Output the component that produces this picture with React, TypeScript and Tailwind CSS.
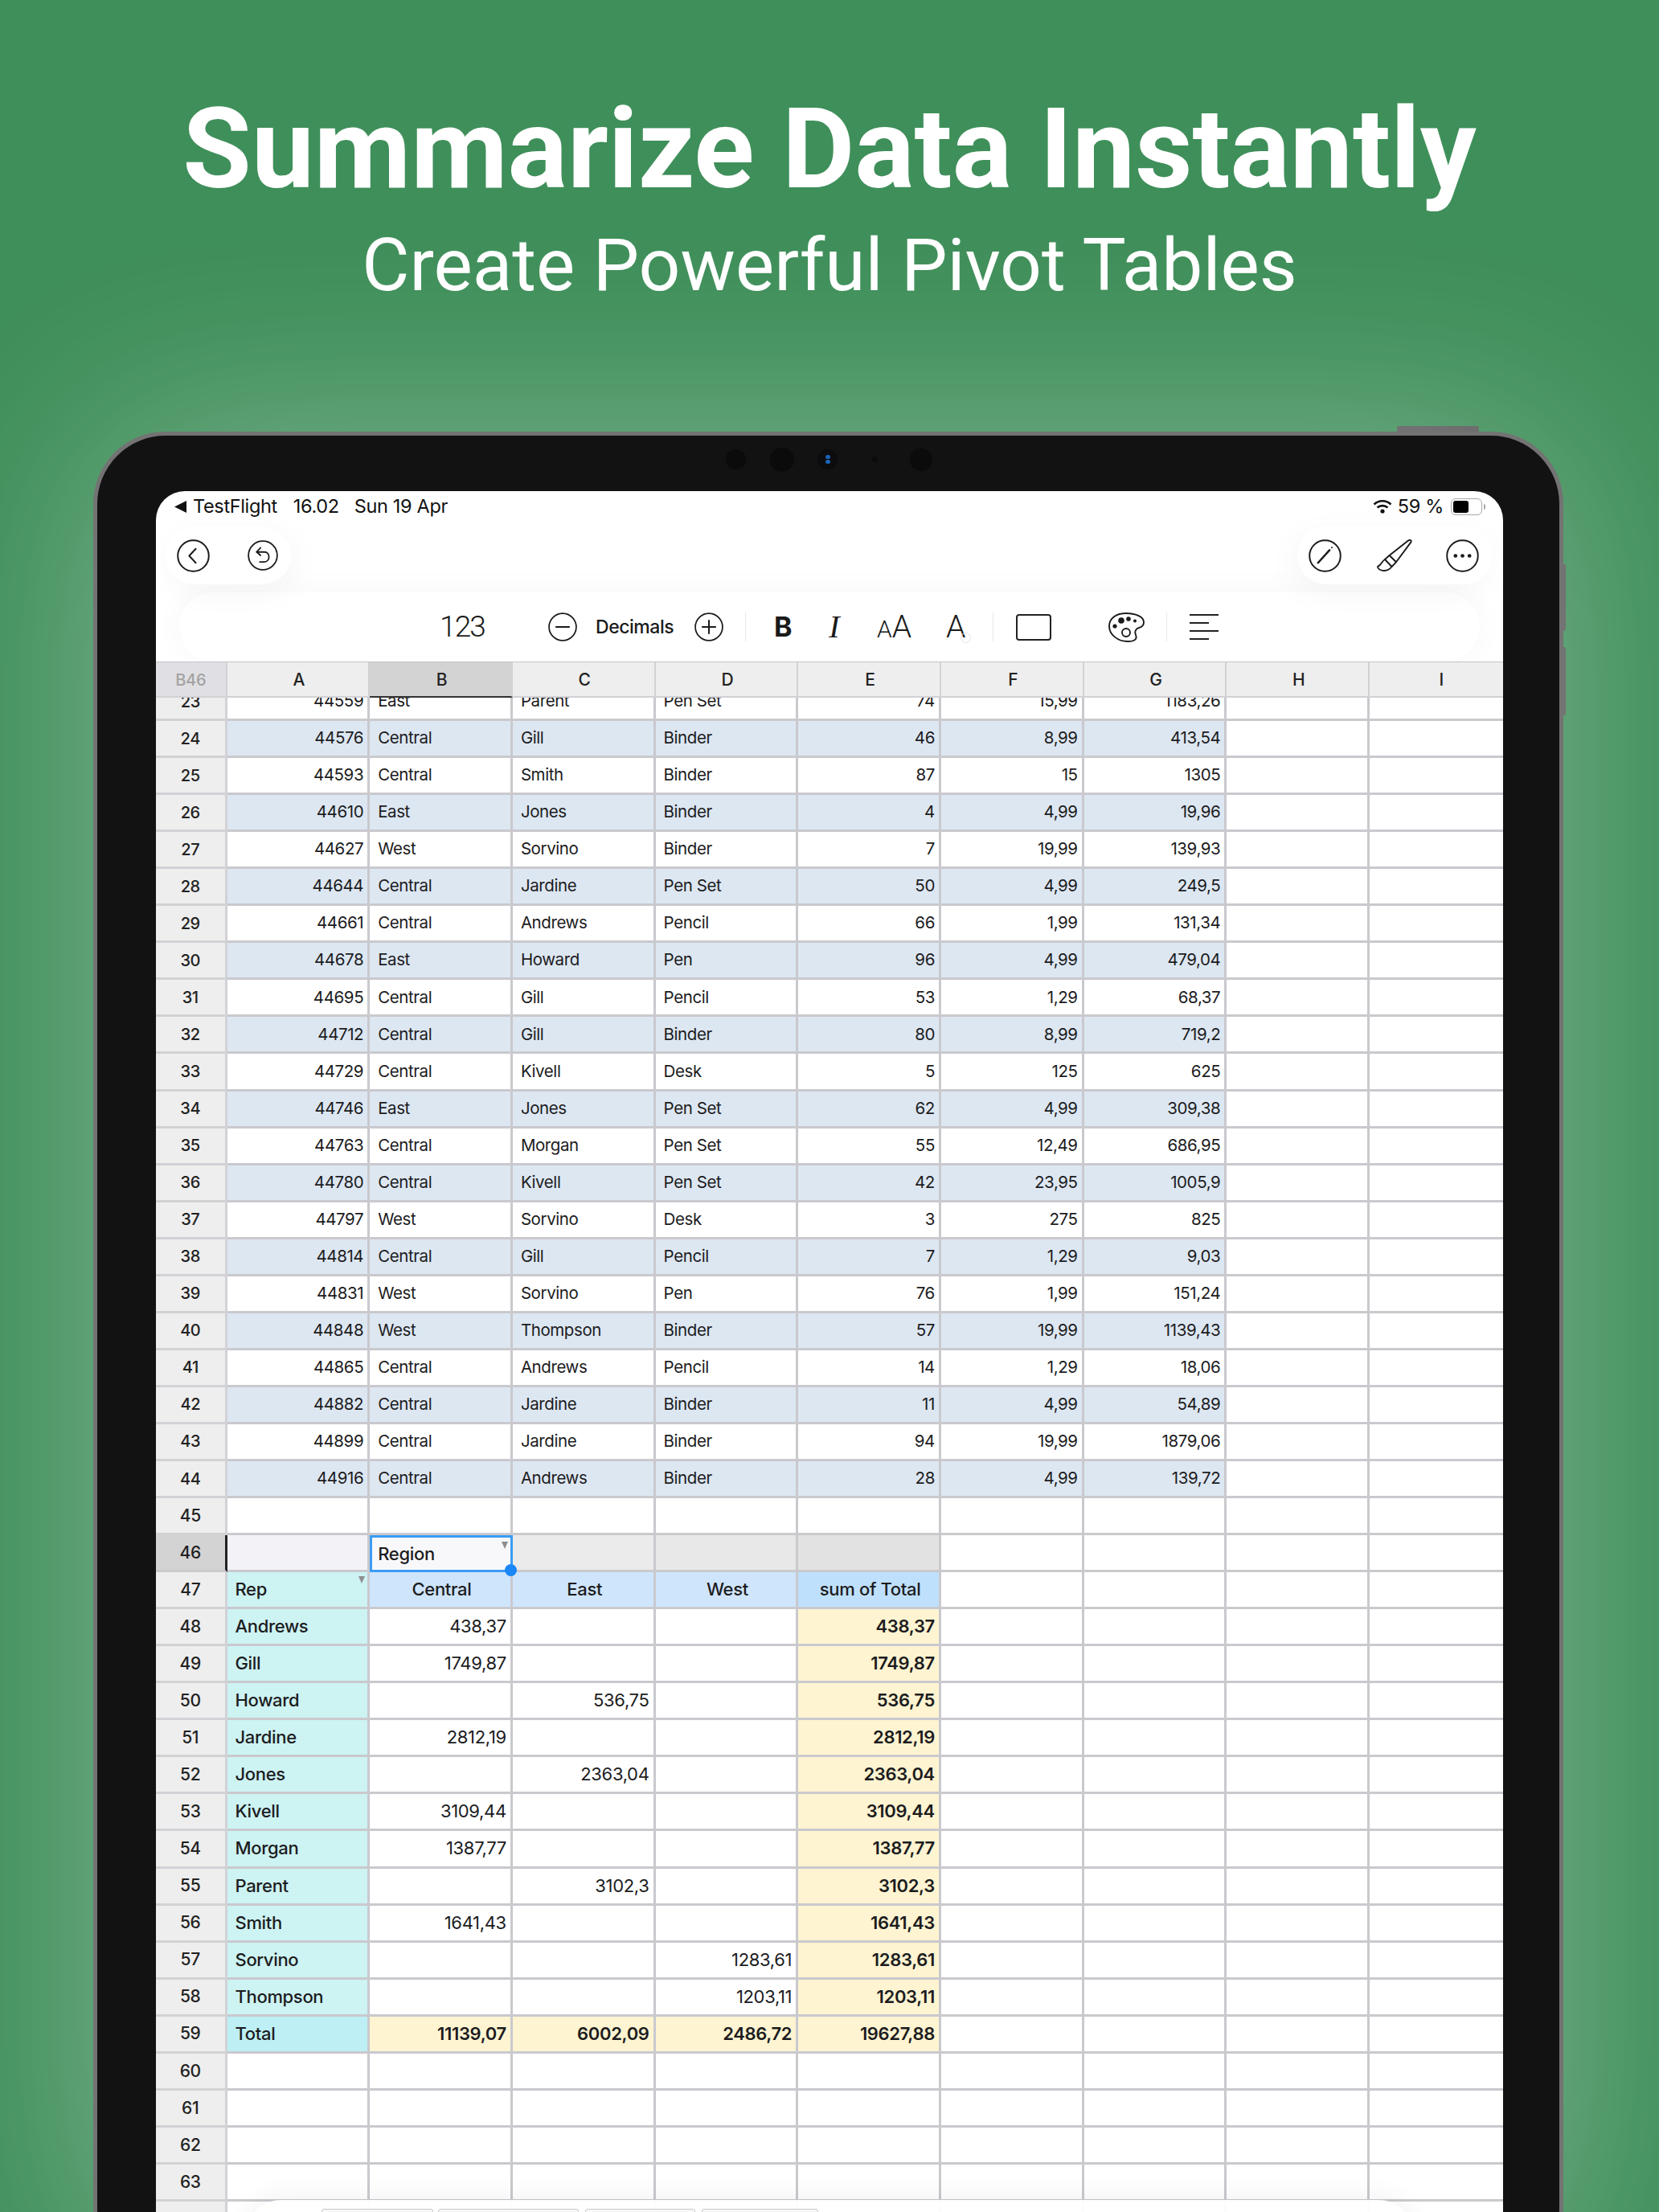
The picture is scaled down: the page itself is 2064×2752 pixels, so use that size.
import React from "react";

type C = { t?: string; a?: "l" | "r" | "c"; bg?: string; w?: string; tri?: boolean; sel?: boolean };

const raw: [number, number, string, string, string, number, string, string][] = [
  [23, 44559, "East", "Parent", "Pen Set", 74, "15,99", "1183,26"],
  [24, 44576, "Central", "Gill", "Binder", 46, "8,99", "413,54"],
  [25, 44593, "Central", "Smith", "Binder", 87, "15", "1305"],
  [26, 44610, "East", "Jones", "Binder", 4, "4,99", "19,96"],
  [27, 44627, "West", "Sorvino", "Binder", 7, "19,99", "139,93"],
  [28, 44644, "Central", "Jardine", "Pen Set", 50, "4,99", "249,5"],
  [29, 44661, "Central", "Andrews", "Pencil", 66, "1,99", "131,34"],
  [30, 44678, "East", "Howard", "Pen", 96, "4,99", "479,04"],
  [31, 44695, "Central", "Gill", "Pencil", 53, "1,29", "68,37"],
  [32, 44712, "Central", "Gill", "Binder", 80, "8,99", "719,2"],
  [33, 44729, "Central", "Kivell", "Desk", 5, "125", "625"],
  [34, 44746, "East", "Jones", "Pen Set", 62, "4,99", "309,38"],
  [35, 44763, "Central", "Morgan", "Pen Set", 55, "12,49", "686,95"],
  [36, 44780, "Central", "Kivell", "Pen Set", 42, "23,95", "1005,9"],
  [37, 44797, "West", "Sorvino", "Desk", 3, "275", "825"],
  [38, 44814, "Central", "Gill", "Pencil", 7, "1,29", "9,03"],
  [39, 44831, "West", "Sorvino", "Pen", 76, "1,99", "151,24"],
  [40, 44848, "West", "Thompson", "Binder", 57, "19,99", "1139,43"],
  [41, 44865, "Central", "Andrews", "Pencil", 14, "1,29", "18,06"],
  [42, 44882, "Central", "Jardine", "Binder", 11, "4,99", "54,89"],
  [43, 44899, "Central", "Jardine", "Binder", 94, "19,99", "1879,06"],
  [44, 44916, "Central", "Andrews", "Binder", 28, "4,99", "139,72"],
];

const pivot: [number, string, string, string, string, string][] = [
  [48, "Andrews", "438,37", "", "", "438,37"],
  [49, "Gill", "1749,87", "", "", "1749,87"],
  [50, "Howard", "", "536,75", "", "536,75"],
  [51, "Jardine", "2812,19", "", "", "2812,19"],
  [52, "Jones", "", "2363,04", "", "2363,04"],
  [53, "Kivell", "3109,44", "", "", "3109,44"],
  [54, "Morgan", "1387,77", "", "", "1387,77"],
  [55, "Parent", "", "3102,3", "", "3102,3"],
  [56, "Smith", "1641,43", "", "", "1641,43"],
  [57, "Sorvino", "", "", "1283,61", "1283,61"],
  [58, "Thompson", "", "", "1203,11", "1203,11"],
];

const BLUE = "bg-[#dde7f2]";
const CYAN = "bg-[#cdf3f3]";
const HEAD = "bg-[#cfe5fc]";
const CREAM = "bg-[#fff4d1]";

function blanks(n: number): C[] {
  return Array.from({ length: n }, () => ({}));
}

function Tri() {
  return (
    <svg width="8" height="9" viewBox="0 0 8 9" className="absolute top-[5px] right-[3px]">
      <polygon points="0,0 8,0 4,9" fill="#8e8e8e" />
    </svg>
  );
}

function Cell({ c }: { c: C }) {
  const align = c.a === "r" ? "justify-end pr-[5px]" : c.a === "c" ? "justify-center pl-[4px]" : "justify-start pl-[10px]";
  return (
    <div
      className={`relative flex h-full w-[177.7px] shrink-0 items-center box-border border-r-[3px] border-b-[3px] border-[#c9c9ce] ${align} ${
        c.bg ?? "bg-white"
      } ${c.w ?? "font-normal"}`}
    >
      {c.t}
      {c.tri && <Tri />}
    </div>
  );
}

function Row({ n, cells, active, big }: { n: number; cells: C[]; active?: boolean; big?: boolean }) {
  return (
    <div className={`flex h-[46.05px] shrink-0 text-[#1c1c1e] ${big ? "text-[22px] tracking-[-0.015em]" : "text-[20.5px] tracking-[-0.02em]"}`}>
      <div
        className={`flex h-full w-[88.5px] shrink-0 items-center justify-center box-border border-b-[3px] border-r-[3px] font-medium text-[#222] ${
          big ? "text-[21px]" : "text-[20px]"
        } ${active ? "bg-[#d3d3d3] border-b-[#c9c9ce] border-r-[#222]" : "bg-[#eeeeee] border-[#d2d2d6]"}`}
      >
        {n}
      </div>
      {cells.map((c, i) =>
        c.sel ? (
          <div
            key={i}
            className="relative flex h-[46px] w-[177.7px] shrink-0 items-center box-border border-[3px] border-[#3b9cf3] bg-[#f8f8fb] pl-[7px] pt-[1px] font-medium"
          >
            {c.t}
            <Tri />
            <div className="absolute -right-[8px] -bottom-[8px] z-10 h-[15px] w-[15px] rounded-full bg-[#1b86f5]" />
          </div>
        ) : (
          <Cell key={i} c={c} />
        )
      )}
    </div>
  );
}

function Ring({ d, children }: { d: number; children: React.ReactNode }) {
  return (
    <svg width={d} height={d} viewBox="0 0 40 40" fill="none" stroke="#1a1a1a" strokeWidth="1.9" strokeLinecap="round" strokeLinejoin="round" className="shrink-0">
      <circle cx="20" cy="20" r="18.8" />
      {children}
    </svg>
  );
}

function Sep({ ml }: { ml: string }) {
  return <div className={`h-[36px] w-[1px] shrink-0 bg-[#e8e8e8] ${ml}`} />;
}

export default function App() {
  const head = ["A", "B", "C", "D", "E", "F", "G", "H", "I"];
  const rows: React.ReactNode[] = [];
  raw.forEach((r) => {
    const bg = r[0] % 2 === 0 ? BLUE : "bg-white";
    rows.push(
      <Row
        key={r[0]}
        n={r[0]}
        cells={[
          { t: String(r[1]), a: "r", bg },
          { t: r[2], bg },
          { t: r[3], bg },
          { t: r[4], bg },
          { t: String(r[5]), a: "r", bg },
          { t: r[6], a: "r", bg },
          { t: r[7], a: "r", bg },
          {},
          {},
        ]}
      />
    );
  });
  rows.push(<Row key={45} n={45} cells={blanks(9)} big />);
  rows.push(
    <Row
      key={46}
      n={46}
      active
      big
      cells={[
        { bg: "bg-[#f2f2f7]" },
        { t: "Region", sel: true },
        { bg: "bg-[#ebebeb]" },
        { bg: "bg-[#e8e8e8]" },
        { bg: "bg-[#e2e2e2]" },
        {},
        {},
        {},
        {},
      ]}
    />
  );
  rows.push(
    <Row
      key={47}
      n={47}
      big
      cells={[
        { t: "Rep", bg: CYAN, w: "font-medium", tri: true },
        { t: "Central", a: "c", bg: HEAD, w: "font-medium" },
        { t: "East", a: "c", bg: HEAD, w: "font-medium" },
        { t: "West", a: "c", bg: HEAD, w: "font-medium" },
        { t: "sum of Total", a: "c", bg: "bg-[#bfe0fd]", w: "font-medium" },
        {},
        {},
        {},
        {},
      ]}
    />
  );
  pivot.forEach((p) => {
    rows.push(
      <Row
        key={p[0]}
        n={p[0]}
        big
        cells={[
          { t: p[1], bg: CYAN, w: "font-medium" },
          { t: p[2], a: "r" },
          { t: p[3], a: "r" },
          { t: p[4], a: "r" },
          { t: p[5], a: "r", bg: CREAM, w: "font-semibold" },
          {},
          {},
          {},
          {},
        ]}
      />
    );
  });
  rows.push(
    <Row
      key={59}
      n={59}
      big
      cells={[
        { t: "Total", bg: "bg-[#bdeff4]", w: "font-medium" },
        { t: "11139,07", a: "r", bg: CREAM, w: "font-semibold" },
        { t: "6002,09", a: "r", bg: CREAM, w: "font-semibold" },
        { t: "2486,72", a: "r", bg: CREAM, w: "font-semibold" },
        { t: "19627,88", a: "r", bg: CREAM, w: "font-semibold" },
        {},
        {},
        {},
        {},
      ]}
    />
  );
  [60, 61, 62, 63, 64].forEach((n) => rows.push(<Row key={n} n={n} cells={blanks(9)} big />));

  return (
    <div className="relative h-[2752px] w-[2064px] overflow-hidden bg-[#3f8f5a] [font-family:Inter,sans-serif]">
      <div className="h-[537px] pt-[119px] text-center text-white [font-family:Roboto,sans-serif]">
        <div className="h-[134px] text-[139px] font-bold leading-[134px] whitespace-nowrap">Summarize Data Instantly</div>
        <div className="mt-[31px] h-[92px] text-[91px] font-normal leading-[92px] whitespace-nowrap">Create Powerful Pivot Tables</div>
      </div>

      <div className="relative ml-[116px] h-[2300px] w-[1829px]">
        <div className="absolute -top-[7px] left-[1622px] h-[8px] w-[102px] rounded-t-[2px] bg-[#5a5a5a]" />
        <div className="absolute top-[165px] -right-[3px] h-[83px] w-[4px] rounded-r-[2px] bg-[#5a5a5a]" />
        <div className="absolute top-[268px] -right-[3px] h-[85px] w-[4px] rounded-r-[2px] bg-[#5a5a5a]" />

        <div className="relative box-border h-full w-full rounded-[90px] border-[5px] border-[#737373] bg-[#121212] pl-[73px] pr-[70px] pt-[69px] shadow-[0_0_300px_rgba(255,255,255,0.32)]">
          {/* camera row */}
          <div className="absolute left-[782px] top-[17px] h-[25px] w-[25px] rounded-full bg-[#0b0b0b]" />
          <div className="absolute left-[837px] top-[15px] h-[30px] w-[30px] rounded-full bg-[#0b0b0b]" />
          <div className="absolute left-[896px] top-[17px] flex h-[25px] w-[25px] flex-col items-center justify-center gap-[1px] rounded-full bg-[#0c0c0e]">
            <div className="h-[5px] w-[6px] rounded-full bg-[#1a63b8]" />
            <div className="h-[5px] w-[6px] rounded-full bg-[#1a63b8]" />
          </div>
          <div className="absolute left-[964px] top-[26px] h-[7px] w-[7px] rounded-full bg-[#0b0b0b]" />
          <div className="absolute left-[1011px] top-[16px] h-[28px] w-[28px] rounded-full bg-[#0b0b0b]" />

          {/* screen */}
          <div className="relative h-[2200px] overflow-hidden rounded-t-[36px] bg-white">
            {/* status bar */}
            <div className="flex h-[44px] items-center justify-between pb-[6px] pl-[23px] pr-[22px] text-[23.5px] tracking-[-0.015em] text-[#111]">
              <div className="flex items-center">
                <svg width="15" height="15" viewBox="0 0 15 15">
                  <polygon points="15,0 15,15 0,7.5" fill="#111" />
                </svg>
                <span className="ml-[8px]">TestFlight</span>
                <span className="ml-[20px]">16.02</span>
                <span className="ml-[19px]">Sun 19 Apr</span>
              </div>
              <div className="flex items-center">
                <svg width="24" height="18" viewBox="0 0 24 18" fill="none" stroke="#111" strokeWidth="2.6">
                  <path d="M1.5 6.5C7.5 0.9 16.5 0.9 22.5 6.5" />
                  <path d="M5.5 10.5C9.3 7.3 14.7 7.3 18.5 10.5" />
                  <circle cx="12" cy="15" r="2.6" fill="#111" stroke="none" />
                </svg>
                <span className="ml-[7px]">59 %</span>
                <div className="ml-[9px] box-border flex h-[21px] w-[39px] items-center rounded-[6px] border-[1.5px] border-[#a8a8a8] p-[2px]">
                  <div className="h-full w-[19px] rounded-[3px] bg-black" />
                </div>
                <div className="ml-[2px] h-[7px] w-[2px] rounded-r-[2px] bg-[#a8a8a8]" />
              </div>
            </div>

            {/* top buttons */}
            <div className="flex h-[72px] items-center justify-between pl-[12px] pr-[13.5px]">
              <div className="flex h-[72px] w-[156px] items-center rounded-[36px] bg-white pl-[14px] shadow-[6px_10px_40px_rgba(0,0,0,0.04)]">
                <Ring d={41}>
                  <path d="M23 11.5L15 20L23 28.5" />
                </Ring>
                <div className="ml-[46.5px]">
                  <Ring d={38}>
                    <path d="M17 10L12 15.5L17 20" />
                    <path d="M12 15.5H22C26 15.5 28 18.5 28 22C28 26 25 28.5 21.5 28.5H16" />
                  </Ring>
                </div>
              </div>
              <div className="flex h-[72px] w-[243px] items-center rounded-[36px] bg-white pl-[14.5px] shadow-[-6px_10px_40px_rgba(0,0,0,0.04)]">
                <Ring d={41}>
                  <path d="M11.5 28.5L25.5 13" strokeWidth="2.4" />
                  <circle cx="28.3" cy="10" r="1" fill="#1a1a1a" stroke="none" />
                </Ring>
                <svg width="44" height="41" viewBox="0 0 44 41" fill="none" stroke="#1a1a1a" strokeWidth="1.9" strokeLinejoin="round" strokeLinecap="round" className="ml-[43.5px] shrink-0">
                  <path d="M15.6 20L39 1.6C41.5 0 43.5 1.5 42.3 3.6L24 28.3Z" />
                  <path d="M15.6 20L10 25L18.5 34L24 28.3" />
                  <path d="M10 25C6 27 6 32 1 34C1 38.5 12 42.5 18.5 34" />
                </svg>
                <div className="ml-[42.5px]">
                  <Ring d={41}>
                    <circle cx="11.5" cy="20" r="2.3" fill="#1a1a1a" stroke="none" />
                    <circle cx="20" cy="20" r="2.3" fill="#1a1a1a" stroke="none" />
                    <circle cx="28.5" cy="20" r="2.3" fill="#1a1a1a" stroke="none" />
                  </Ring>
                </div>
              </div>
            </div>

            {/* format toolbar */}
            <div className="ml-[29px] mt-[10px] flex h-[86px] w-[1618px] items-center rounded-[43px] bg-white text-[#1a1a1a] shadow-[0_0_40px_rgba(0,0,0,0.035)]">
              <div className="ml-[321px] w-[62px] shrink-0 text-center text-[37px] font-light tracking-[-0.05em] [font-family:Roboto,sans-serif]">123</div>
              <div className="ml-[76px]">
                <Ring d={36}>
                  <path d="M11 20H29" strokeWidth="2.2" />
                </Ring>
              </div>
              <div className="ml-[23px] w-[99px] shrink-0 whitespace-nowrap text-[23px] font-medium tracking-[-0.02em]">Decimals</div>
              <div className="ml-[24px]">
                <Ring d={36}>
                  <path d="M11 20H29M20 11V29" strokeWidth="2.2" />
                </Ring>
              </div>
              <Sep ml="ml-[27px]" />
              <div className="ml-[35px] w-[22px] shrink-0 text-center text-[34px] font-bold leading-none">B</div>
              <div className="ml-[43px] w-[20px] shrink-0 text-center text-[40px] italic leading-none [font-family:'Liberation_Serif',serif]">I</div>
              <div className="ml-[44px] flex w-[41px] shrink-0 items-baseline justify-center font-light [font-family:Roboto,sans-serif]">
                <span className="text-[30px] leading-none">A</span>
                <span className="text-[39px] leading-none">A</span>
              </div>
              <div className="relative ml-[44px] w-[20px] shrink-0 text-center text-[39px] font-light leading-none [font-family:Roboto,sans-serif]">
                A
                <div className="absolute -right-[11px] bottom-[0px] h-[13px] w-[13px] rounded-full border border-[#e4e4e4]" />
              </div>
              <Sep ml="ml-[38px]" />
              <div className="ml-[28px] box-border h-[33px] w-[44px] shrink-0 rounded-[4px] border-2 border-[#222]" />
              <svg width="45" height="37" viewBox="0 0 45 37" fill="none" stroke="#1a1a1a" strokeWidth="1.9" className="ml-[71px] shrink-0">
                <path d="M22 1C10 1 1 7 1 17C1 28 12 36 24 36C33 36 36 33 34 28C32 24 34 20 38 19C42 18 44 16 44 12C44 5 33 1 22 1Z" />
                <circle cx="16" cy="10" r="3.8" fill="#1a1a1a" stroke="none" />
                <circle cx="25" cy="8" r="2.8" fill="#1a1a1a" stroke="none" />
                <circle cx="33" cy="10.5" r="2" fill="#1a1a1a" stroke="none" />
                <circle cx="8" cy="17" r="2.6" fill="#1a1a1a" stroke="none" />
                <circle cx="22" cy="25" r="5" />
              </svg>
              <Sep ml="ml-[27px]" />
              <div className="ml-[28px] flex w-[36px] shrink-0 flex-col gap-[8px]">
                <div className="h-[2px] w-[36px] bg-[#222]" />
                <div className="h-[2px] w-[24px] bg-[#222]" />
                <div className="h-[2px] w-[36px] bg-[#222]" />
                <div className="h-[2px] w-[24px] bg-[#222]" />
              </div>
            </div>

            {/* column headers */}
            <div className="relative z-10 flex h-[45px] border-t-[1px] border-[#c4c4c8] text-[21px] font-medium tracking-[-0.01em] text-[#222]">
              <div className="flex w-[88.5px] shrink-0 items-center justify-center box-border border-b-[2px] border-r-[2px] border-[#d2d2d6] bg-[#e0e0e4] pt-[1px] text-[20px] text-[#a3a3a3]">B46</div>
              {head.map((h) => (
                <div
                  key={h}
                  className={`flex w-[177.7px] shrink-0 items-center justify-center box-border border-b-[2px] border-r-[2px] pl-[3px] pt-[1px] ${
                    h === "B" ? "bg-[#d3d3d3] border-b-[#333] border-r-[#d2d2d6]" : "bg-[#eeeeee] border-[#d2d2d6]"
                  }`}
                >
                  {h}
                </div>
              ))}
            </div>

            {/* grid */}
            <div className="h-[1900px] overflow-hidden">
              <div className="-mt-[17px] flex flex-col">{rows}</div>
            </div>

            {/* bottom floating tab bar */}
            <div className="absolute left-[111px] top-[2126px] z-20 flex h-[100px] w-[1455px] rounded-[45px] bg-white/95 pl-[95px] pt-[11px] shadow-[0_-6px_30px_rgba(0,0,0,0.05)]">
              <div className="h-[60px] w-[139px] rounded-t-[3px] border border-[#c8c8c8] bg-[#f7f7f7]" />
              <div className="ml-[6px] h-[60px] w-[175px] rounded-t-[3px] border border-[#c8c8c8] bg-[#f7f7f7]" />
              <div className="ml-[8px] h-[60px] w-[137px] rounded-t-[3px] border border-[#c8c8c8] bg-[#f7f7f7]" />
              <div className="ml-[8px] h-[60px] w-[145px] rounded-t-[3px] border border-[#c8c8c8] bg-[#f7f7f7]" />
            </div>
          </div>
        </div>
      </div>
    </div>
  );
}
